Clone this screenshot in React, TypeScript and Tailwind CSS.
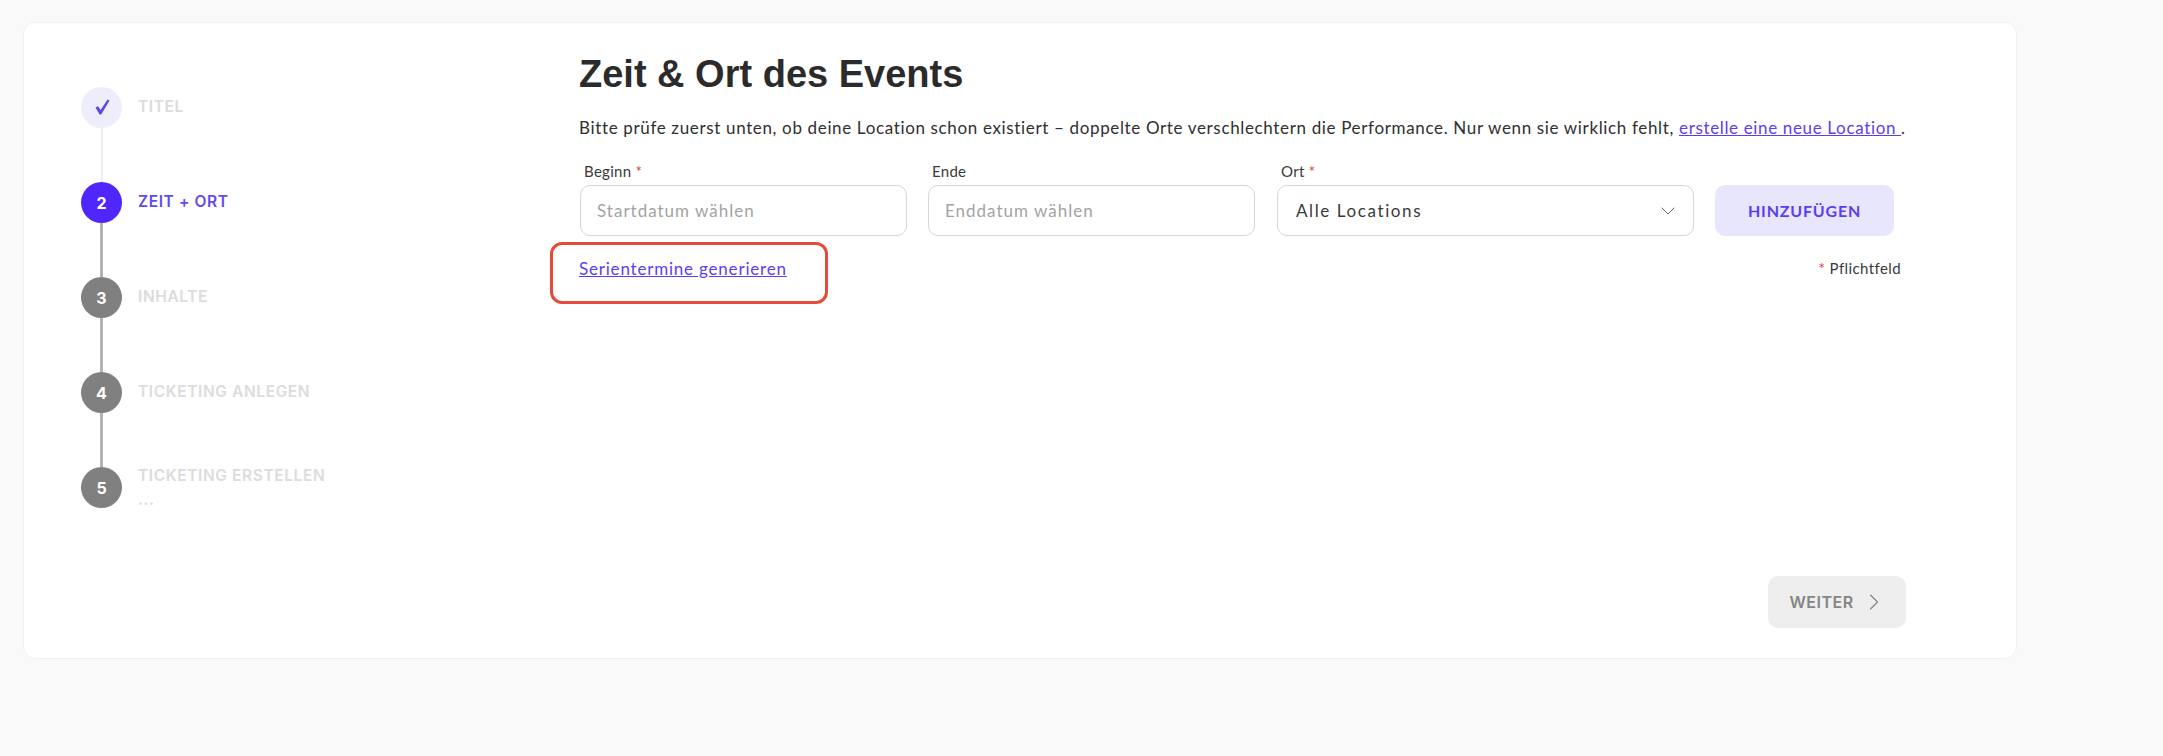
import React from 'react';
import { ChevronDown, ChevronRight } from 'lucide-react';

const steps = [
  { key: 'titel', mark: '', label: 'TITEL', state: 'done' },
  { key: 'zeit', mark: '2', label: 'ZEIT + ORT', state: 'active' },
  { key: 'inhalte', mark: '3', label: 'INHALTE', state: 'todo' },
  { key: 'anlegen', mark: '4', label: 'TICKETING ANLEGEN', state: 'todo' },
  { key: 'erstellen', mark: '5', label: 'TICKETING ERSTELLEN', state: 'todo' },
];

// tapered tick, the glyph in the reference is thin on the short arm
const Tick: React.FC = () => (
  <svg width="15" height="16" viewBox="0 0 15 16" className="ml-[2px] -mt-[2px]">
    <path d="M0.5 8.5 L3 7.2 L5.6 11 L12.6 0.5 L14.5 1.4 L6.2 15.5 L4.6 15.5 Z" fill="#5b46ee" />
  </svg>
);

const Stepper: React.FC = () => (
  <div className="w-[556px] shrink-0 pl-[57px] pt-[64px] font-['Inter',sans-serif]">
    {steps.map((step, i) => (
      <div key={step.key} className="flex">
        <div className="flex w-[41px] flex-col items-center">
          <div
            className={
              step.state === 'done'
                ? 'flex h-[41px] w-[41px] items-center justify-center rounded-full bg-[#eeedfc]'
                : step.state === 'active'
                  ? 'flex h-[41px] w-[41px] items-center justify-center rounded-full bg-[#4f26fb] text-[16px] font-bold text-white'
                  : 'flex h-[41px] w-[41px] items-center justify-center rounded-full bg-[#808080] text-[16px] font-bold text-white'
            }
          >
            {step.state === 'done' ? <Tick /> : step.mark}
          </div>
          {i < steps.length - 1 && (
            <div className={step.state === 'done' ? 'h-[54px] w-[2px] bg-[#eeedfc]' : 'h-[54px] w-[3px] bg-[#b3b3b3]'} />
          )}
        </div>
        <div className="ml-[16px] h-[41px]">
          {step.key === 'erstellen' ? (
            <div className="-mt-[3px] text-[15.5px] font-semibold leading-[24px] tracking-[0.6px] text-[#dcdcdc]">
              {step.label}
              <div className="leading-[24px] text-[#dcdcdc]">...</div>
            </div>
          ) : (
            <div
              className={
                step.state === 'active'
                  ? '-mt-[1px] text-[15.5px] font-semibold leading-[41px] tracking-[0.6px] text-[#5f4bf0]'
                  : '-mt-[1px] text-[15.5px] font-semibold leading-[41px] tracking-[0.6px] text-[#dcdcdc]'
              }
            >
              {step.label}
            </div>
          )}
        </div>
      </div>
    ))}
  </div>
);

const Required: React.FC = () => <span className="text-[#d9363e]"> *</span>;

const inputClass =
  "flex h-[51px] w-full items-center rounded-[10px] border border-[#d6d6d6] bg-white px-[16px] font-['Lato',sans-serif] text-[17px]";
const labelClass = "mb-[4px] pl-[4px] font-['Lato',sans-serif] text-[15px] leading-[20px] tracking-[0.3px] text-[#3a3a3a]";

export default function App() {
  return (
    <div className="h-[756px] w-full bg-[#f9f9f9] pl-[23px] pt-[22px]">
      <div className="flex h-[637px] w-[1994px] rounded-[12px] border border-[#f1f1f1] bg-white">
        <Stepper />
        <div className="flex w-[1326px] flex-col pt-[29px] font-['Lato',sans-serif]">
          <h1 className="-ml-[1px] font-['Liberation_Sans',sans-serif] text-[38px] font-bold leading-[44px] text-[#2b2b2b]">
            Zeit &amp; Ort des Events
          </h1>
          <p className="-ml-[1px] mt-[20px] whitespace-nowrap text-[17px] leading-[24px] tracking-[0.65px] text-[#2f2f2f]">
            Bitte prüfe zuerst unten, ob deine Location schon existiert – doppelte Orte verschlechtern die Performance. Nur wenn sie wirklich fehlt,{' '}
            <a href="#" className="text-[#5b3df5] underline">erstelle eine neue Location </a>.
          </p>
          <div className="mt-[21px] flex items-end">
            <div className="w-[327px]">
              <div className={labelClass}>Beginn<Required /></div>
              <div className={inputClass + ' tracking-[1px] text-[#a3a3a3]'}>Startdatum wählen</div>
            </div>
            <div className="ml-[21px] w-[327px]">
              <div className={labelClass}>Ende</div>
              <div className={inputClass + ' tracking-[1px] text-[#a3a3a3]'}>Enddatum wählen</div>
            </div>
            <div className="ml-[22px] w-[417px]">
              <div className={labelClass}>Ort<Required /></div>
              <div className={inputClass + ' justify-between tracking-[1.6px] text-[#3a3a3a]'}>
                <span className="pl-[2px]">Alle Locations</span>
                <ChevronDown size={24} strokeWidth={1} className="mr-[-3px] text-[#6b6b6b]" />
              </div>
            </div>
            <button className="ml-[21px] h-[51px] w-[179px] rounded-[10px] bg-[#e7e6fc] text-[16px] font-bold tracking-[0.8px] text-[#5b3df5]">
              HINZUFÜGEN
            </button>
          </div>
          <div className="relative mt-[22px] flex items-center justify-between">
            <a href="#" className="-ml-[1px] text-[17px] leading-[22px] tracking-[0.8px] text-[#5b3df5] underline">Serientermine generieren</a>
            <span className="-mt-[2px] pr-[5px] text-[15px] leading-[22px] tracking-[0.4px] text-[#3a3a3a]"><span className="text-[#d9363e]">*</span> Pflichtfeld</span>
            <div className="absolute left-[-30px] top-[-16px] h-[62px] w-[278px] rounded-[12px] border-[3px] border-[#e34c38]" />
          </div>
          <div className="mt-auto mb-[30px] flex justify-end">
            <button className="flex h-[52px] w-[138px] items-center justify-center gap-[6px] rounded-[10px] bg-[#eeeeee] font-['Inter',sans-serif] text-[16px] font-semibold tracking-[0.5px] text-[#858585]">
              WEITER
              <ChevronRight size={28} strokeWidth={1} className="-mr-[3px]" />
            </button>
          </div>
        </div>
      </div>
    </div>
  );
}
